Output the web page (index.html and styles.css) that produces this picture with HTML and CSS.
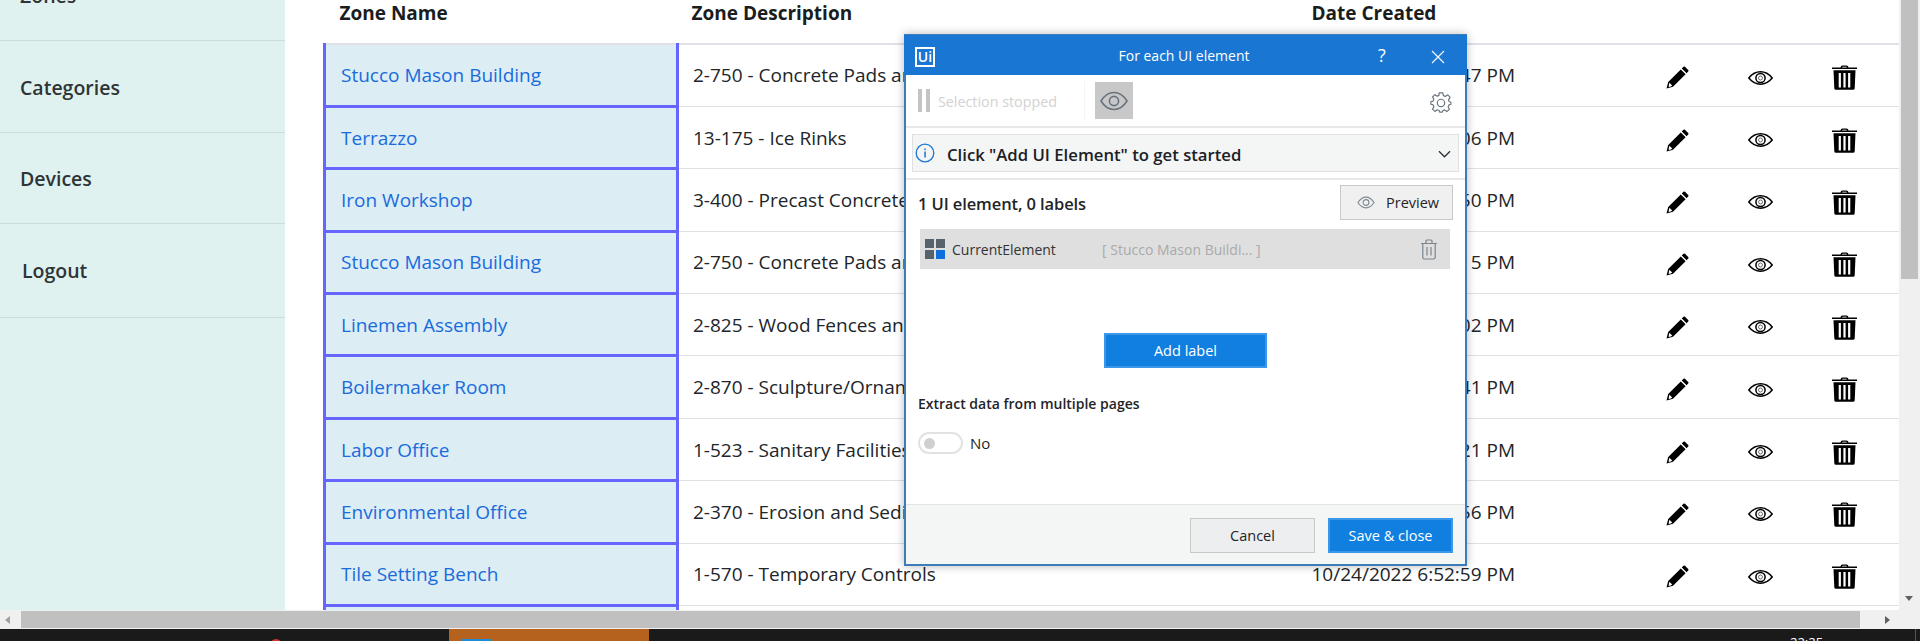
FILE: index.html
```html
<!DOCTYPE html>
<html lang="en">
<head>
<meta charset="utf-8">
<title>Zones</title>
<link rel="stylesheet" href="styles.css">
</head>
<body>
<svg class="defs" width="0" height="0" aria-hidden="true">
  <symbol id="i-pencil" viewBox="0 0 23 23">
    <path d="M0.500 22.500 L2.200 16 L14.800 3.400 L19.600 8.200 L7 20.800 Z M3.400 16.800 L6.200 19.600 L4.800 20.600 L2.600 21 L3 18.600 Z" fill="#000" fill-rule="evenodd"/>
    <path d="M15.800 2.400 L17.400 0.800 Q18.200 0 19 0.800 L22.200 4 Q23 4.800 22.200 5.600 L20.600 7.200 Z" fill="#000"/>
  </symbol>
  <symbol id="i-eye" viewBox="0 0 25 14">
    <path d="M0.800 7 C4.500 2.400 8.500 0.800 12.500 0.800 C16.500 0.800 20.500 2.400 24.200 7 C20.500 11.600 16.500 13.200 12.500 13.200 C8.500 13.200 4.500 11.600 0.800 7 Z" fill="none" stroke="#000" stroke-width="1.500"/>
    <circle cx="12.500" cy="7" r="4.600" fill="none" stroke="#000" stroke-width="1.500"/>
    <circle cx="12.500" cy="7" r="2" fill="none" stroke="#000" stroke-width=".9" opacity=".6"/>
  </symbol>
  <symbol id="i-trash" viewBox="0 0 25 25">
    <path d="M8.500 2.400 Q8.700 .4 10.500 .4 H14.500 Q16.300 .4 16.500 2.400 H25 V4 H0 V2.400 Z M10.100 2.400 H14.900 Q14.800 1.700 14.300 1.700 H10.700 Q10.200 1.700 10.100 2.400 Z" fill="#000" fill-rule="evenodd"/>
    <path d="M1.500 5.300 H23.500 L22.700 23.200 Q22.600 24.800 21.100 24.800 H3.900 Q2.400 24.800 2.300 23.200 Z M6.700 8 V22.400 H8.900 V8 Z M11.400 8 V22.400 H13.600 V8 Z M16.100 8 V22.400 H18.300 V8 Z" fill="#000" fill-rule="evenodd"/>
  </symbol>
</svg>

<div class="screen">
  <div class="page">
    <nav class="sidebar">
      <a class="nav-item">Zones</a>
      <a class="nav-item">Categories</a>
      <a class="nav-item nav-devices">Devices</a>
      <a class="nav-item nav-logout">Logout</a>
    </nav>
    <main class="content">
      <table class="zones">
        <colgroup>
          <col class="c-name"><col class="c-desc"><col class="c-date"><col class="c-act"><col class="c-act2"><col class="c-act3">
        </colgroup>
        <thead>
          <tr><th>Zone Name</th><th>Zone Description</th><th>Date Created</th><th></th><th></th><th></th></tr>
        </thead>
        <tbody>
          <tr><td class="hl"><a>Stucco Mason Building</a></td><td>2-750 - Concrete Pads and Walks</td><td>10/24/2022 6:53:47 PM</td><td class="act"><svg class="ic-pencil"><use href="#i-pencil"/></svg></td><td class="act"><svg class="ic-eye"><use href="#i-eye"/></svg></td><td class="act act-last"><svg class="ic-trash"><use href="#i-trash"/></svg></td></tr>
          <tr><td class="hl"><a>Terrazzo</a></td><td>13-175 - Ice Rinks</td><td>10/24/2022 6:53:06 PM</td><td class="act"><svg class="ic-pencil"><use href="#i-pencil"/></svg></td><td class="act"><svg class="ic-eye"><use href="#i-eye"/></svg></td><td class="act act-last"><svg class="ic-trash"><use href="#i-trash"/></svg></td></tr>
          <tr><td class="hl"><a>Iron Workshop</a></td><td>3-400 - Precast Concrete</td><td>10/24/2022 6:53:50 PM</td><td class="act"><svg class="ic-pencil"><use href="#i-pencil"/></svg></td><td class="act"><svg class="ic-eye"><use href="#i-eye"/></svg></td><td class="act act-last"><svg class="ic-trash"><use href="#i-trash"/></svg></td></tr>
          <tr><td class="hl"><a>Stucco Mason Building</a></td><td>2-750 - Concrete Pads and Walks</td><td>10/24/2022 6:53:15 PM</td><td class="act"><svg class="ic-pencil"><use href="#i-pencil"/></svg></td><td class="act"><svg class="ic-eye"><use href="#i-eye"/></svg></td><td class="act act-last"><svg class="ic-trash"><use href="#i-trash"/></svg></td></tr>
          <tr><td class="hl"><a>Linemen Assembly</a></td><td>2-825 - Wood Fences and Gates</td><td>10/24/2022 6:53:02 PM</td><td class="act"><svg class="ic-pencil"><use href="#i-pencil"/></svg></td><td class="act"><svg class="ic-eye"><use href="#i-eye"/></svg></td><td class="act act-last"><svg class="ic-trash"><use href="#i-trash"/></svg></td></tr>
          <tr><td class="hl"><a>Boilermaker Room</a></td><td>2-870 - Sculpture/Ornamental</td><td>10/24/2022 6:53:41 PM</td><td class="act"><svg class="ic-pencil"><use href="#i-pencil"/></svg></td><td class="act"><svg class="ic-eye"><use href="#i-eye"/></svg></td><td class="act act-last"><svg class="ic-trash"><use href="#i-trash"/></svg></td></tr>
          <tr><td class="hl"><a>Labor Office</a></td><td>1-523 - Sanitary Facilities</td><td>10/24/2022 6:53:21 PM</td><td class="act"><svg class="ic-pencil"><use href="#i-pencil"/></svg></td><td class="act"><svg class="ic-eye"><use href="#i-eye"/></svg></td><td class="act act-last"><svg class="ic-trash"><use href="#i-trash"/></svg></td></tr>
          <tr><td class="hl"><a>Environmental Office</a></td><td>2-370 - Erosion and Sediment Control</td><td>10/24/2022 6:52:56 PM</td><td class="act"><svg class="ic-pencil"><use href="#i-pencil"/></svg></td><td class="act"><svg class="ic-eye"><use href="#i-eye"/></svg></td><td class="act act-last"><svg class="ic-trash"><use href="#i-trash"/></svg></td></tr>
          <tr><td class="hl"><a>Tile Setting Bench</a></td><td>1-570 - Temporary Controls</td><td>10/24/2022 6:52:59 PM</td><td class="act"><svg class="ic-pencil"><use href="#i-pencil"/></svg></td><td class="act"><svg class="ic-eye"><use href="#i-eye"/></svg></td><td class="act act-last"><svg class="ic-trash"><use href="#i-trash"/></svg></td></tr>
          <tr><td class="hl"></td><td></td><td></td><td></td><td></td><td></td></tr>
        </tbody>
      </table>
    </main>
    <div class="vscroll">
      <div class="vthumb"></div>
      <span class="arrow-down"></span>
    </div>
  </div>
  <div class="hscroll">
    <span class="arrow-left"></span>
    <div class="hthumb"></div>
    <span class="arrow-right"></span>
    <div class="corner"></div>
  </div>
  <footer class="taskbar">
    <span class="tb-red"></span>
    <div class="tb-app"><span class="tb-appicon"></span></div>
    <span class="tb-clock">22:25</span>
    <span class="tb-edge"></span>
  </footer>
</div>

<section class="dialog">
  <header class="d-title">
    <span class="d-logo">Ui</span>
    <span class="d-name">For each UI element</span>
    <span class="d-help">?</span>
    <svg class="d-close" viewBox="0 0 14 14"><path d="M1 1 L13 13 M13 1 L1 13" stroke="#fff" stroke-width="1.100" fill="none"/></svg>
  </header>
  <div class="d-tools">
    <span class="d-pause"><i></i><i></i></span>
    <span class="d-stopped">Selection stopped</span>
    <span class="d-sep"></span>
    <span class="d-eyebtn">
      <svg viewBox="0 0 28 20" width="28" height="20"><path d="M1 10 C5 3.500 9.500 1.500 14 1.500 C18.500 1.500 23 3.500 27 10 C23 16.500 18.500 18.500 14 18.500 C9.500 18.500 5 16.500 1 10 Z" fill="none" stroke="#68737d" stroke-width="1.600"/><circle cx="14" cy="10" r="4.600" fill="none" stroke="#68737d" stroke-width="1.600"/></svg>
    </span>
    <svg class="d-gear" viewBox="0 0 24 24"><path d="M10 2 H14 L14.600 5 L16.800 5.900 L19.400 4.200 L22 7 L20.200 9.500 L21 11.700 L22.800 12 V14.500 L20.700 15.200 L19.800 17.400 L21.200 20 L18.400 22.400 L16 20.600 L14 21.400 L13.500 23 H10.500 L10 21.300 L7.800 20.500 L5.400 22.300 L2.700 19.700 L4.300 17.300 L3.400 15.100 L1 14.500 V11.500 L3.400 11 L4.200 8.900 L2.800 6.500 L5.400 4 L7.800 5.600 L9.800 4.800 Z" fill="none" stroke="#6b767f" stroke-width="1.300" stroke-linejoin="round"/><circle cx="12" cy="13" r="4" fill="none" stroke="#6b767f" stroke-width="1.300"/></svg>
  </div>
  <div class="d-bannerwrap">
    <div class="d-banner">
      <svg class="d-info" viewBox="0 0 20 20"><circle cx="10" cy="10" r="8.800" fill="none" stroke="#1976d2" stroke-width="1.300"/><rect x="9.300" y="8.500" width="1.500" height="6" fill="#1976d2"/><rect x="9.300" y="5.500" width="1.500" height="1.600" fill="#1976d2"/></svg>
      <span class="d-bannertext">Click "Add UI Element" to get started</span>
      <svg class="d-chev" viewBox="0 0 14 8"><path d="M1 1 L7 7 L13 1" fill="none" stroke="#2b3238" stroke-width="1.400"/></svg>
    </div>
  </div>
  <div class="d-body">
    <div class="d-headrow">
      <span class="d-count">1 UI element, 0 labels</span>
      <button class="btn btn-preview">
        <svg viewBox="0 0 20 14" width="18" height="13"><path d="M1 7 C4 2.500 7 1 10 1 C13 1 16 2.500 19 7 C16 11.500 13 13 10 13 C7 13 4 11.500 1 7 Z" fill="none" stroke="#7c868e" stroke-width="1.200"/><circle cx="10" cy="7" r="3.200" fill="none" stroke="#7c868e" stroke-width="1.200"/></svg>
        <span>Preview</span>
      </button>
    </div>
    <div class="d-element">
      <span class="d-grid"><i></i><i></i><i></i><i class="on"></i></span>
      <span class="d-elname">CurrentElement</span>
      <span class="d-elval">[ Stucco Mason Buildi... ]</span>
      <svg class="d-bin" viewBox="0 0 18 21"><path d="M1 4.500 H17 M6 4.500 V2 Q6 1 7 1 H11 Q12 1 12 2 V4.500 M2.800 4.500 V18.500 Q2.800 20 4.300 20 H13.700 Q15.200 20 15.200 18.500 V4.500 M7 8 V16.500 M11 8 V16.500" fill="none" stroke="#7a858d" stroke-width="1.200"/></svg>
    </div>
    <button class="btn btn-primary btn-add">Add label</button>
    <div class="d-extract">Extract data from multiple pages</div>
    <div class="d-toggle"><span class="d-switch"><i></i></span><span class="d-no">No</span></div>
  </div>
  <footer class="d-foot">
    <button class="btn btn-cancel">Cancel</button>
    <button class="btn btn-primary btn-save">Save &amp; close</button>
  </footer>
</section>
</body>
</html>
```

FILE: styles.css
```css
* { box-sizing: border-box; }
html, body { margin: 0; height: 100%; overflow: hidden; }
body { font-family: "Open Sans", "Noto Sans", sans-serif; background: #fff; color: #212529; position: relative; }
.defs { position: absolute; }

.screen { display: flex; flex-direction: column; height: 641px; }
.page { display: flex; height: 610px; overflow: hidden; flex: none; }

.sidebar { width: 285px; flex: none; background: #dff2f0; margin-top: -51px; height: 700px; }
.nav-item { display: flex; align-items: center; height: 92px; padding: 1px 0 0 20px; border-bottom: 1px solid #cddcdb; font-weight: 600; font-size: 19.500px; color: #2f3436; }
.nav-devices { height: 91px; }
.nav-logout { padding: 0 0 0 22px; height: 94px; }

.content { flex: 1; min-width: 0; padding-left: 38px; background: #fff; }
.zones { border-collapse: collapse; table-layout: fixed; width: 1576px; font-size: 19px; }
.c-name { width: 353px; } .c-desc { width: 620px; } .c-date { width: 338px; }
.c-act { width: 83px; } .c-act2 { width: 83px; } .c-act3 { width: 99px; }
.zones th { height: 43px; padding: 0 0 17px 14px; text-align: left; font-weight: 700; font-size: 19px; color: #1a1d20; border-bottom: 2px solid #dee2e6; }
.zones th:first-child { padding-left: 15px; }
.zones td { height: 62.400px; padding: 0 0 0 14px; border-bottom: 1px solid #dee2e6; white-space: nowrap; vertical-align: middle; }
.zones td.hl { background: #dcedf4; border: 3px solid #6666ff; border-top: 0; padding-left: 15px; }
.zones a { color: #1a6bdc; }
.zones td.act { padding: 5px 0 0; text-align: center; line-height: 0; }
.zones td.act-last { padding-right: 14px; }
.ic-pencil { width: 23px; height: 23px; }
.ic-eye { width: 25px; height: 14px; }
.ic-trash { width: 25px; height: 25px; }

.vscroll { width: 21px; flex: none; background: #f0f0f0; position: relative; }
.vthumb { width: 17px; height: 279px; margin-left: 2px; background: #c0c0c0; }
.arrow-down { position: absolute; left: 6px; bottom: 9px; border: 4.500px solid transparent; border-top: 5px solid #606060; border-bottom: 0; }

.hscroll { height: 19px; flex: none; display: flex; align-items: center; background: #f0f0f0; }
.arrow-left { width: 0; margin-left: 5px; border: 4.500px solid transparent; border-right: 5px solid #a0a0a0; border-left: 0; }
.hthumb { width: 1839px; height: 17px; margin-left: 11px; background: #c0c0c0; }
.arrow-right { width: 0; margin-left: 25px; border: 4.500px solid transparent; border-left: 5px solid #606060; border-right: 0; }
.corner { flex: 1; }

.taskbar { flex: 1; background: #1a1a1a; display: flex; position: relative; overflow: hidden; }
.tb-red { position: absolute; left: 270px; top: 10px; width: 12px; height: 12px; border-radius: 50%; background: #d9342b; }
.tb-app { position: absolute; left: 449px; top: 0; width: 200px; height: 12px; background: #b5621f; }
.tb-appicon { position: absolute; left: 13px; top: 10px; width: 30px; height: 10px; background: #1f8ad6; }
.tb-clock { position: absolute; left: 1790px; top: 6px; font-size: 13px; line-height: 14px; color: #fff; }
.tb-edge { position: absolute; left: 1915px; top: 0; width: 1px; height: 12px; background: #555; }

.dialog { position: absolute; left: 904px; top: 34px; width: 563px; height: 532px; display: flex; flex-direction: column; background: #fff; border: 2px solid #3c7cb8; border-top: 0; box-shadow: 0 0 9px rgba(0,0,0,.28); font-size: 14px; color: #1f2428; }
.d-title { height: 41px; flex: none; margin: 0 -2px; padding-right: 3px; background: #1976d2; color: #fff; position: relative; display: flex; align-items: center; justify-content: center; border-top: 1px solid #3c7cb8; }
.d-logo { position: absolute; left: 11px; top: 12px; width: 20px; height: 20px; border: 2px solid #fff; font-size: 14px; line-height: 16px; text-align: center; font-weight: 600; }
.d-name { font-size: 14px; }
.d-help { position: absolute; left: 474px; top: 8px; font-size: 18px; }
.d-close { position: absolute; left: 527px; top: 15px; width: 14px; height: 14px; }

.d-tools { height: 53px; flex: none; display: flex; align-items: center; padding-left: 12px; border-bottom: 2px solid #e8e8e8; position: relative; }
.d-pause { display: flex; gap: 4px; }
.d-pause i { width: 4px; height: 23px; background: #c4c4c4; }
.d-stopped { margin: 2px 0 0 8px; width: 146px; color: #d2d2d2; font-size: 14.300px; }
.d-sep { width: 1px; height: 40px; background: #f5f5f5; }
.d-eyebtn { margin-left: 10px; width: 38px; height: 37px; background: #c8c8c8; display: flex; align-items: center; justify-content: center; }
.d-gear { position: absolute; left: 524px; top: 16px; width: 22px; height: 22px; }

.d-bannerwrap { height: 52px; flex: none; padding: 6px 6px 0; border-bottom: 2px solid #e8e8e8; }
.d-banner { height: 38px; background: #f4f5f5; border: 1px solid #dfe1e1; display: flex; align-items: center; padding-left: 2px; position: relative; }
.d-info { width: 20px; height: 20px; }
.d-bannertext { margin: 2px 0 0 12px; font-size: 16.700px; font-weight: 600; color: #1b2024; }
.d-chev { position: absolute; right: 7px; top: 15px; width: 13px; height: 8px; }

.d-body { flex: 1; padding: 5px 12px 0; display: flex; flex-direction: column; }
.d-headrow { height: 35px; flex: none; display: flex; align-items: center; justify-content: space-between; }
.d-count { font-size: 16.500px; font-weight: 600; letter-spacing: -.1px; margin-top: 1px; }
.btn { font-family: inherit; font-size: 14.500px; color: #1f2428; border: 1px solid #c8c8c8; background: #f0f0f0; padding: 0; }
.btn-preview { width: 113px; height: 35px; display: flex; align-items: center; padding-left: 16px; gap: 11px; }
.d-element { margin: 9px 3px 0 2px; height: 40px; flex: none; background: #dfdfdf; display: flex; align-items: center; padding-left: 5px; position: relative; }
.d-grid { display: grid; grid-template-columns: 9px 9px; grid-auto-rows: 9px; gap: 2px; }
.d-grid i { background: #56626c; }
.d-grid i.on { background: #0c6fdb; }
.d-elname { margin: 0 0 0 7px; width: 150px; color: #333; }
.d-elval { color: #aaa; }
.d-bin { position: absolute; right: 12px; top: 10px; width: 18px; height: 21px; }
.btn-primary { background: #117fe0; border: 2px solid #3c97e8; color: #fff; }
.btn-add { align-self: flex-start; width: 163px; height: 35px; flex: none; margin: 64px 0 0 186px; }
.d-extract { margin-top: 26px; font-size: 14px; line-height: 20px; font-weight: 600; }
.d-toggle { display: flex; align-items: center; margin-top: 18px; }
.d-switch { width: 45px; height: 22px; border: 2px solid #e2e2e2; border-radius: 11px; display: flex; align-items: center; padding-left: 4px; }
.d-switch i { width: 11px; height: 11px; border-radius: 50%; background: #d0d0d0; }
.d-no { margin-left: 7px; font-size: 15px; }

.d-foot { height: 60px; flex: none; background: #f4f5f5; border-top: 1px solid #e2e4e4; display: flex; justify-content: flex-end; align-items: flex-start; gap: 13px; padding: 13px 12px 0 0; }
.btn-cancel { width: 125px; height: 35px; background: #edeef0; }
.btn-save { width: 125px; height: 35px; }
```
